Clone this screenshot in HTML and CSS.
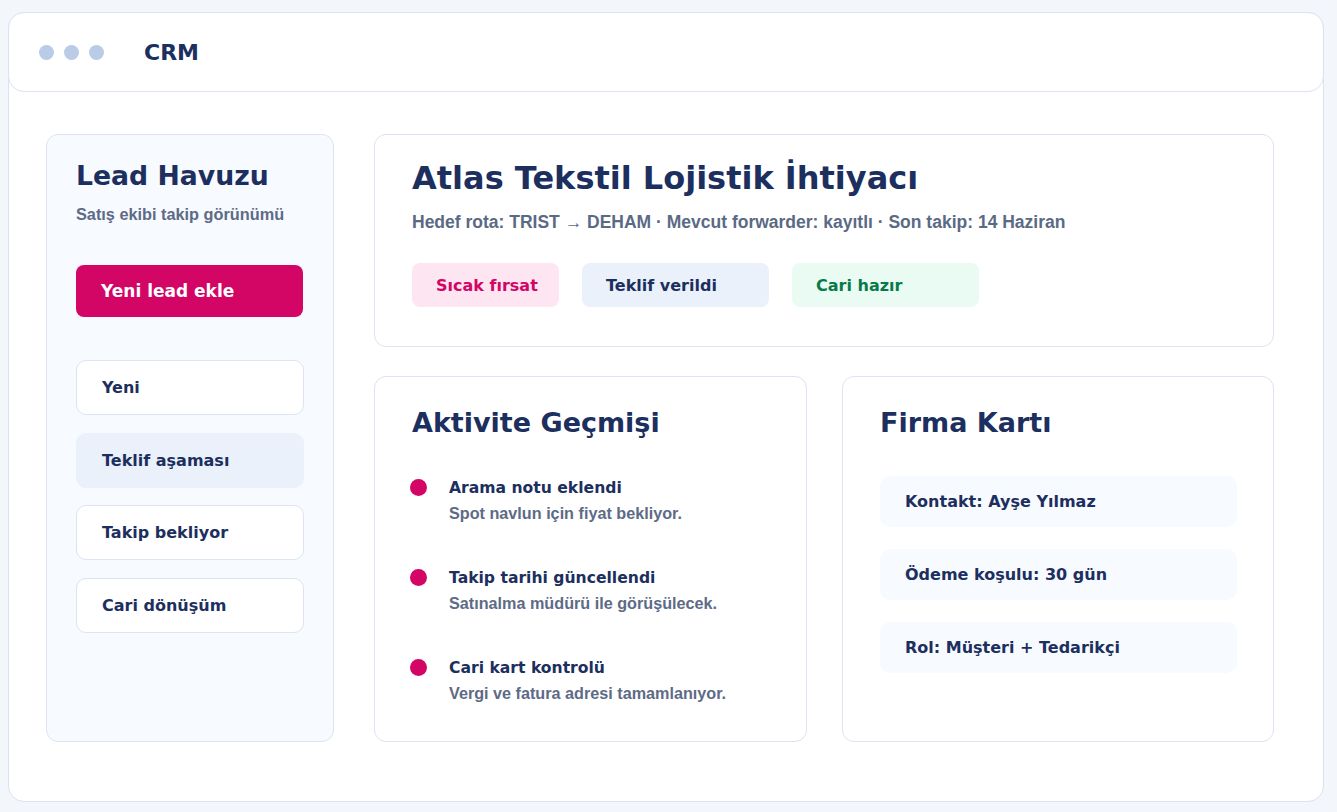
FILE: index.html
```html
<!DOCTYPE html>
<html lang="tr">
<head>
<meta charset="utf-8">
<title>CRM</title>
<link rel="stylesheet" href="styles.css">
</head>
<body>
<div class="frame">
  <header class="topbar">
    <div class="dots"><span></span><span></span><span></span></div>
    <div class="brand">CRM</div>
  </header>
  <div class="content">
    <aside class="sidebar">
      <h2 class="side-title">Lead Havuzu</h2>
      <p class="side-sub">Satış ekibi takip görünümü</p>
      <button class="primary">Yeni lead ekle</button>
      <nav class="nav">
        <div class="nav-item">Yeni</div>
        <div class="nav-item active">Teklif aşaması</div>
        <div class="nav-item">Takip bekliyor</div>
        <div class="nav-item">Cari dönüşüm</div>
      </nav>
    </aside>
    <main class="main">
      <section class="card hero">
        <h1 class="hero-title">Atlas Tekstil Lojistik İhtiyacı</h1>
        <p class="hero-meta">Hedef rota: TRIST → DEHAM · Mevcut forwarder: kayıtlı · Son takip: 14 Haziran</p>
        <div class="tags">
          <span class="tag tag-hot">Sıcak fırsat</span>
          <span class="tag tag-offer">Teklif verildi</span>
          <span class="tag tag-ready">Cari hazır</span>
        </div>
      </section>
      <div class="row">
        <section class="card activity">
          <h2 class="card-title">Aktivite Geçmişi</h2>
          <ul class="timeline">
            <li><span class="dot"></span><div><div class="ev-title">Arama notu eklendi</div><div class="ev-desc">Spot navlun için fiyat bekliyor.</div></div></li>
            <li><span class="dot"></span><div><div class="ev-title">Takip tarihi güncellendi</div><div class="ev-desc">Satınalma müdürü ile görüşülecek.</div></div></li>
            <li><span class="dot"></span><div><div class="ev-title">Cari kart kontrolü</div><div class="ev-desc">Vergi ve fatura adresi tamamlanıyor.</div></div></li>
          </ul>
        </section>
        <section class="card company">
          <h2 class="card-title">Firma Kartı</h2>
          <div class="info">Kontakt: Ayşe Yılmaz</div>
          <div class="info">Ödeme koşulu: 30 gün</div>
          <div class="info">Rol: Müşteri + Tedarikçi</div>
        </section>
      </div>
    </main>
  </div>
</div>
</body>
</html>
```

FILE: styles.css
```css
* { box-sizing: border-box; }
html, body { margin: 0; padding: 0; }
body {
  background: #f3f6fb;
  font-family: "DejaVu Sans", Verdana, sans-serif;
  color: #1c2f5e;
  padding: 12px 13px 10px 8px;
}
.frame {
  width: 1316px;
  height: 790px;
  background: #ffffff;
  border: 1px solid #d9e3f1;
  border-radius: 16px;
}
.topbar {
  height: 80px;
  margin: -1px -1px 0 -1px;
  border: 1px solid #d9e3f1;
  border-radius: 16px;
  background: #fff;
  display: flex;
  align-items: center;
  padding-left: 30px;
}
.dots { display: flex; gap: 10px; }
.dots span {
  width: 15px; height: 15px; border-radius: 50%;
  background: #b9cbe7;
}
.brand {
  margin-left: 40px;
  font-size: 22px;
  font-weight: 700;
  color: #1c2f5e;
}
.content {
  display: flex;
  gap: 40px;
  padding: 42px 0 0 37px;
}
.sidebar {
  width: 288px;
  height: 608px;
  background: #f7faff;
  border: 1px solid #dbe4f0;
  border-radius: 12px;
  padding: 24px 29px 0 29px;
}
.side-title {
  margin: 0;
  font-size: 26.7px;
  line-height: 34px;
  font-weight: 700;
}
.side-sub {
  margin: 12px 0 0 0;
  font-family: "Liberation Sans", Arial, sans-serif;
  font-size: 16.3px;
  line-height: 18px;
  font-weight: 700;
  color: #5d6b86;
}
.primary {
  display: block;
  width: 227px;
  height: 52px;
  margin-top: 42px;
  border: 0;
  border-radius: 8px;
  background: #d30565;
  color: #fff;
  font-family: inherit;
  font-size: 17px;
  font-weight: 700;
  text-align: left;
  padding-left: 25px;
}
.nav { margin-top: 43px; display: flex; flex-direction: column; gap: 17.7px; }
.nav-item {
  height: 55px;
  border: 1px solid #dce4f0;
  border-radius: 10px;
  background: #fff;
  display: flex;
  align-items: center;
  padding-left: 25px;
  font-size: 16px;
  font-weight: 700;
}
.nav-item.active { background: #eaf1fb; border-color: #eaf1fb; }
.main { width: 900px; display: flex; flex-direction: column; gap: 29px; }
.card {
  background: #fff;
  border: 1px solid #dbe4f0;
  border-radius: 12px;
}
.hero { height: 213px; padding: 22px 37px 0 37px; }
.hero-title {
  margin: 0;
  font-size: 32px;
  line-height: 42px;
  font-weight: 700;
}
.hero-meta {
  margin: 13px 0 0 0;
  font-family: "Liberation Sans", Arial, sans-serif;
  font-size: 17.5px;
  line-height: 20px;
  font-weight: 700;
  color: #5a6a85;
}
.tags { display: flex; gap: 23px; margin-top: 31px; }
.tag {
  height: 44px;
  border-radius: 8px;
  display: flex;
  align-items: center;
  padding-left: 24px;
  font-size: 16px;
  font-weight: 700;
}
.tag-hot { width: 147px; background: #fde6f1; color: #d30565; }
.tag-offer { width: 187px; background: #eaf1fb; color: #1c2f5e; }
.tag-ready { width: 187px; background: #eafbf3; color: #067a4b; }
.row { display: flex; gap: 35px; }
.activity, .company { height: 366px; padding: 28px 37px 0 37px; }
.activity { width: 433px; }
.company { width: 432px; }
.card-title {
  margin: 0;
  font-size: 27px;
  line-height: 36px;
  font-weight: 700;
}
.timeline { list-style: none; margin: 37px 0 0 -2px; padding: 0; display: flex; flex-direction: column; gap: 45px; }
.timeline li { display: flex; gap: 22px; align-items: flex-start; }
.dot {
  flex: none;
  width: 17px; height: 17px; border-radius: 50%;
  background: #d30565;
  margin-top: 1px;
}
.ev-title { font-size: 15.6px; font-weight: 700; line-height: 20px; }
.ev-desc {
  font-family: "Liberation Sans", Arial, sans-serif;
  font-size: 16.2px;
  font-weight: 700;
  line-height: 20px;
  color: #5d6b86;
  margin-top: 5px;
}
.info {
  width: 357px;
  height: 51px;
  background: #f7faff;
  border-radius: 10px;
  display: flex;
  align-items: center;
  padding-left: 25px;
  font-size: 16px;
  font-weight: 700;
  margin-top: 22px;
}
.company .card-title + .info { margin-top: 35px; }
```
